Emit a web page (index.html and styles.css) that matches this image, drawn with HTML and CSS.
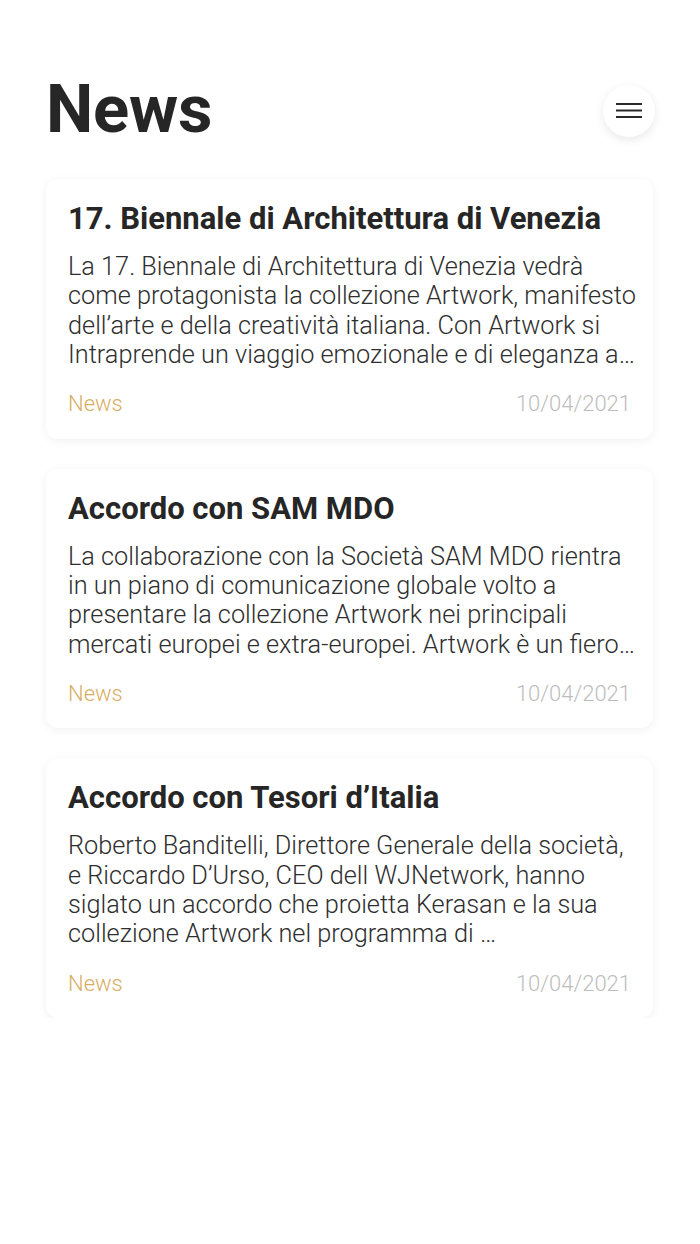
FILE: index.html
```html
<!DOCTYPE html>
<html lang="it">
<head>
<meta charset="utf-8">
<title>News</title>
<link rel="stylesheet" href="styles.css">
</head>
<body>
<main class="page">
  <header class="header">
    <h1 class="page-title">News</h1>
    <button class="menu-btn" aria-label="Menu">
      <svg width="26" height="16" viewBox="0 0 26 16" aria-hidden="true">
        <rect x="0" y="0" width="26" height="2" fill="#2a2a2a"/>
        <rect x="0" y="6.5" width="26" height="2" fill="#2a2a2a"/>
        <rect x="0" y="13" width="26" height="2" fill="#2a2a2a"/>
      </svg>
    </button>
  </header>

  <section class="list">
    <article class="card">
      <h2 class="card-title">17. Biennale di Architettura di Venezia</h2>
      <p class="card-text">La 17. Biennale di Architettura di Venezia vedrà come protagonista la collezione Artwork, manifesto dell’arte e della creatività italiana. Con Artwork si Intraprende un viaggio emozionale e di eleganza a…</p>
      <div class="card-foot">
        <span class="tag">News</span>
        <span class="date">10/04/2021</span>
      </div>
    </article>

    <article class="card">
      <h2 class="card-title">Accordo con SAM MDO</h2>
      <p class="card-text">La collaborazione con la Società SAM MDO rientra in un piano di comunicazione globale volto a presentare la collezione Artwork nei principali mercati europei e extra-europei. Artwork è un fiero…</p>
      <div class="card-foot">
        <span class="tag">News</span>
        <span class="date">10/04/2021</span>
      </div>
    </article>

    <article class="card">
      <h2 class="card-title">Accordo con Tesori d’Italia</h2>
      <p class="card-text">Roberto Banditelli, Direttore Generale della società, e Riccardo D’Urso, CEO dell WJNetwork, hanno siglato un accordo che proietta Kerasan e la sua collezione Artwork nel programma di …</p>
      <div class="card-foot">
        <span class="tag">News</span>
        <span class="date">10/04/2021</span>
      </div>
    </article>
  </section>
</main>
</body>
</html>
```

FILE: styles.css
```css
* { box-sizing: border-box; }

html, body {
  margin: 0;
  padding: 0;
  background: #ffffff;
}

body {
  font-family: Roboto, "Liberation Sans", Arial, sans-serif;
  color: #262626;
}

.page {
  padding: 76px 47px 0 46px;
}

.header {
  display: flex;
  align-items: center;
  justify-content: space-between;
  height: 66px;
}

.page-title {
  margin: 0;
  font-size: 67px;
  line-height: 66px;
  font-weight: 700;
  color: #262626;
  letter-spacing: -0.2px;
}

.menu-btn {
  width: 52px;
  height: 52px;
  border-radius: 50%;
  border: none;
  background: #ffffff;
  box-shadow: 0 3px 10px rgba(0, 0, 0, 0.09);
  display: flex;
  align-items: center;
  justify-content: center;
  padding: 0;
  margin-right: -2px;
  margin-top: 3px;
}

.menu-btn svg { display: block; }

.list {
  display: flex;
  flex-direction: column;
  gap: 30px;
  margin-top: 37px;
}

.card {
  background: #ffffff;
  border-radius: 12px;
  box-shadow: 0 2px 10px rgba(0, 0, 0, 0.06);
  padding: 22px 22px 21.5px 22px;
}

.card-title {
  margin: 0;
  font-size: 31px;
  line-height: 36px;
  font-weight: 700;
  color: #262626;
  white-space: nowrap;
}

.card-text {
  margin: 15px -10px 0 0;
  font-size: 25.3px;
  line-height: 29.3px;
  font-weight: 300;
  color: #2e2e2e;
  display: -webkit-box;
  -webkit-box-orient: vertical;
  -webkit-line-clamp: 4;
  overflow: hidden;
}

.card-foot {
  display: flex;
  justify-content: space-between;
  align-items: center;
  margin-top: 22px;
  font-size: 22px;
  line-height: 26px;
  font-weight: 300;
}

.tag { color: #d8ad63; }

.date { color: #bdbdbd; }
```
